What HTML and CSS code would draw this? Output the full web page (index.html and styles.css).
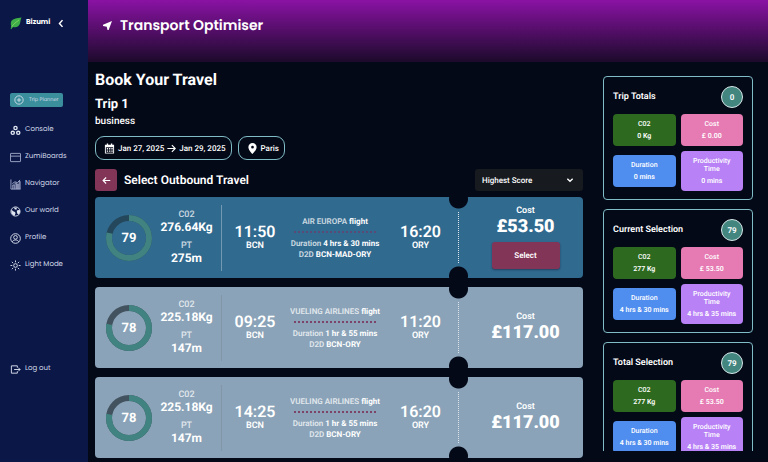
FILE: index.html
```html
<!DOCTYPE html>
<html lang="en">
<head>
<meta charset="utf-8">
<meta name="viewport" content="width=device-width, initial-scale=1">
<title>Transport Optimiser</title>
<link rel="stylesheet" href="styles.css">
</head>
<body>
<div class="app">
  <nav class="sidebar" aria-label="Main">
    <div class="brand">
      <svg class="brand-leaf" viewBox="0 0 24 24" aria-hidden="true"><path fill="#3fae49" d="M23 1C14 2 4 3 2 10c-1 4 0 7 1 9L1 23l2 1 3-4c7 2 12-1 14-7 1-4 1-8 3-12z"/><path d="M3 20C7 14 12 10 18 6" stroke="#8fdc6a" stroke-width="1.5" fill="none"/></svg>
      <span>Bizumi</span>
      <button class="collapse" type="button" aria-label="Collapse menu"><svg viewBox="0 0 8 12" aria-hidden="true"><path d="M6 1.500 2 6l4 4.500"/></svg></button>
    </div>
    <a class="nav-link nav-active" href="#"><svg class="icon" viewBox="0 0 24 24" aria-hidden="true"><circle cx="12" cy="12" r="10"/><path d="M12 7v10M7 12h10"/></svg>Trip Planner</a>
    <a class="nav-link" href="#"><svg class="icon icon-bold" viewBox="0 0 24 24" aria-hidden="true"><circle cx="12" cy="6.500" r="3.500"/><circle cx="6" cy="17" r="3.500"/><circle cx="18" cy="17" r="3.500"/></svg>Console</a>
    <a class="nav-link" href="#"><svg class="icon icon-thin" viewBox="0 0 24 24" aria-hidden="true"><rect x="1" y="3" width="22" height="18" rx="1"/><path d="M1 9h22"/></svg>ZumiBoards</a>
    <a class="nav-link" href="#"><svg class="icon icon-thin" viewBox="0 0 24 24" aria-hidden="true"><path d="M2 1v21h21M6 22V13h3v9M11 22V9h3v13M16 22V11h2v11M20 22V5h2v17M5 10l6-4 5 2 6-6"/></svg>Navigator</a>
    <a class="nav-link" href="#"><svg class="icon" viewBox="0 0 24 24" aria-hidden="true"><circle cx="12" cy="12" r="10"/><path class="solid" d="M3 8l5 4 3 1 1 3-2 5C5 20 2 15 3 8zM9 3l1 4 4 1 1-4zM15 10l6-2 1 5-3 5-3-1-1-4z"/></svg>Our world</a>
    <a class="nav-link" href="#"><svg class="icon" viewBox="0 0 24 24" aria-hidden="true"><circle cx="12" cy="12" r="10.500"/><circle cx="12" cy="9.500" r="4"/><path d="M5 19c2-5 12-5 14 0"/></svg>Profile</a>
    <a class="nav-link" href="#"><svg class="icon" viewBox="0 0 24 24" aria-hidden="true"><circle cx="12" cy="12" r="4"/><path d="M12 1v4M12 19v4M1 12h4M19 12h4M4 4l3 3M17 17l3 3M20 4l-3 3M7 17l-3 3"/></svg>Light Mode</a>
    <a class="nav-link nav-logout" href="#"><svg class="icon" viewBox="0 0 24 24" aria-hidden="true"><path d="M16 8V4H3v16h13v-4M9 12h13M18 8l4 4-4 4"/></svg>Log out</a>
  </nav>

  <div class="page">
    <header class="banner">
      <svg class="banner-icon" viewBox="0 0 24 24" aria-hidden="true"><path d="M24 0 0 10v3l10 2 2 9h3z"/></svg>
      <h1>Transport Optimiser</h1>
    </header>

    <div class="content">
      <main class="booking">
        <h2>Book Your Travel</h2>
        <h3>Trip 1</h3>
        <p class="purpose">business</p>
        <div class="chips">
          <button class="chip" type="button">
            <svg viewBox="0 0 24 24" aria-hidden="true"><path fill-rule="evenodd" d="M2 4h4V1h3v3h6V1h3v3h4v19H2zM4 9.500V21h16V9.500zM6 11h3v2H6zm5 0h3v2h-3zm5 0h3v2h-3zM6 14h3v2H6zm5 0h3v2h-3zm5 0h3v2h-3zM6 17h3v2H6zm5 0h3v2h-3zm5 0h3v2h-3z"/></svg>
            <span>Jan 27, 2025</span>
            <svg class="line" viewBox="0 0 24 24" aria-hidden="true"><path d="M1 12h21M13 3l9 9-9 9"/></svg>
            <span>Jan 29, 2025</span>
          </button>
          <button class="chip" type="button">
            <svg viewBox="0 0 24 24" aria-hidden="true"><path fill-rule="evenodd" d="M12 0a9 9 0 0 0-9 9c0 6 9 15 9 15s9-9 9-15a9 9 0 0 0-9-9zm0 6a3 3 0 1 1 0 6 3 3 0 0 1 0-6z"/></svg>
            <span>Paris</span>
          </button>
        </div>
        <div class="toolbar">
          <button class="back" type="button" aria-label="Back"><svg viewBox="0 0 24 24" aria-hidden="true"><path d="M22 12H3M11 4l-8 8 8 8"/></svg></button>
          <h4>Select Outbound Travel</h4>
          <div class="sort">
            <select aria-label="Sort by"><option>Highest Score</option><option>Lowest Cost</option></select>
            <svg viewBox="0 0 12 8" aria-hidden="true"><path d="M2 2l4 4 4-4"/></svg>
          </div>
        </div>

        <article class="ticket ticket-selected">
          <div class="scores">
            <div class="ring"><svg viewBox="0 0 46 46" aria-hidden="true"><circle class="track" cx="23" cy="23" r="20"/><circle class="value" cx="23" cy="23" r="20" pathLength="100" stroke-dasharray="79 100"/></svg><b>79</b></div>
            <dl><dt>C02</dt><dd>276.64Kg</dd><dt>PT</dt><dd>275m</dd></dl>
          </div>
          <div class="route">
            <div class="stop"><time>11:50</time><span>BCN</span></div>
            <div class="leg"><p><span>AIR EUROPA</span> flight</p><hr><p><span>Duration</span> 4 hrs &amp; 30 mins</p><p><span>D2D</span> BCN-MAD-ORY</p></div>
            <div class="stop"><time>16:20</time><span>ORY</span></div>
          </div>
          <div class="cost"><span>Cost</span><strong>£53.50</strong><button class="select" type="button">Select</button></div>
        </article>

        <article class="ticket">
          <div class="scores">
            <div class="ring"><svg viewBox="0 0 46 46" aria-hidden="true"><circle class="track" cx="23" cy="23" r="20"/><circle class="value" cx="23" cy="23" r="20" pathLength="100" stroke-dasharray="78 100"/></svg><b>78</b></div>
            <dl><dt>C02</dt><dd>225.18Kg</dd><dt>PT</dt><dd>147m</dd></dl>
          </div>
          <div class="route">
            <div class="stop"><time>09:25</time><span>BCN</span></div>
            <div class="leg"><p><span>VUELING AIRLINES</span> flight</p><hr><p><span>Duration</span> 1 hr &amp; 55 mins</p><p><span>D2D</span> BCN-ORY</p></div>
            <div class="stop"><time>11:20</time><span>ORY</span></div>
          </div>
          <div class="cost"><span>Cost</span><strong>£117.00</strong></div>
        </article>

        <article class="ticket">
          <div class="scores">
            <div class="ring"><svg viewBox="0 0 46 46" aria-hidden="true"><circle class="track" cx="23" cy="23" r="20"/><circle class="value" cx="23" cy="23" r="20" pathLength="100" stroke-dasharray="78 100"/></svg><b>78</b></div>
            <dl><dt>C02</dt><dd>225.18Kg</dd><dt>PT</dt><dd>147m</dd></dl>
          </div>
          <div class="route">
            <div class="stop"><time>14:25</time><span>BCN</span></div>
            <div class="leg"><p><span>VUELING AIRLINES</span> flight</p><hr><p><span>Duration</span> 1 hr &amp; 55 mins</p><p><span>D2D</span> BCN-ORY</p></div>
            <div class="stop"><time>16:20</time><span>ORY</span></div>
          </div>
          <div class="cost"><span>Cost</span><strong>£117.00</strong></div>
        </article>
      </main>

      <aside class="summary">
        <section class="panel">
          <header><h5>Trip Totals</h5><span class="badge">0</span></header>
          <div class="tiles">
            <div class="tile tile-co2"><span>C02</span><b>0 Kg</b></div>
            <div class="tile tile-cost"><span>Cost</span><b>£ 0.00</b></div>
            <div class="tile tile-duration"><span>Duration</span><b>0 mins</b></div>
            <div class="tile tile-productivity"><span>Productivity Time</span><b>0 mins</b></div>
          </div>
        </section>
        <section class="panel">
          <header><h5>Current Selection</h5><span class="badge">79</span></header>
          <div class="tiles">
            <div class="tile tile-co2"><span>C02</span><b>277 Kg</b></div>
            <div class="tile tile-cost"><span>Cost</span><b>£ 53.50</b></div>
            <div class="tile tile-duration"><span>Duration</span><b>4 hrs &amp; 30 mins</b></div>
            <div class="tile tile-productivity"><span>Productivity Time</span><b>4 hrs &amp; 35 mins</b></div>
          </div>
        </section>
        <section class="panel">
          <header><h5>Total Selection</h5><span class="badge">79</span></header>
          <div class="tiles">
            <div class="tile tile-co2"><span>C02</span><b>277 Kg</b></div>
            <div class="tile tile-cost"><span>Cost</span><b>£ 53.50</b></div>
            <div class="tile tile-duration"><span>Duration</span><b>4 hrs &amp; 30 mins</b></div>
            <div class="tile tile-productivity"><span>Productivity Time</span><b>4 hrs &amp; 35 mins</b></div>
          </div>
        </section>
      </aside>
    </div>
  </div>
</div>
</body>
</html>
```
FILE: styles.css
```css
:root {
  --bg: #040918;
  --navy: #0a1747;
  --teal: #43857f;
  --outline: #7fbcc6;
  --plum: #833557;
}

* { box-sizing: border-box; margin: 0; }

body {
  background: var(--bg);
  color: #fff;
  font-family: Roboto, "Liberation Sans", sans-serif;
  text-rendering: geometricPrecision;
}

button, select { font: inherit; color: inherit; border: 0; padding: 0; background: none; text-rendering: inherit; }
svg { flex: none; display: block; }

.app { display: flex; height: 100vh; overflow: hidden; }

/* Sidebar */
.sidebar {
  flex: 0 0 88px;
  display: flex;
  flex-direction: column;
  gap: 13px;
  padding: 16px 10px 86px;
  background: var(--navy);
  font-family: Poppins, Inter, sans-serif;
}
.brand {
  display: flex;
  align-items: center;
  gap: 4px;
  height: 14px;
  margin-bottom: 50px;
  font-size: 7px;
  font-weight: 700;
}
.brand-leaf { width: 12px; height: 12px; }
.collapse { margin-left: 4px; }
.collapse svg { width: 6px; height: 9px; fill: none; stroke: #fff; stroke-width: 2; }
.nav-link {
  display: flex;
  align-items: center;
  gap: 4px;
  height: 14px;
  color: #d3d9e8;
  font-size: 7px;
  text-decoration: none;
  white-space: nowrap;
}
.nav-active {
  gap: 5px;
  width: 53px;
  margin-bottom: 3px;
  padding-left: 4px;
  border-radius: 2px;
  background: #3b8f9c;
  font-size: 5px;
}
.nav-active .icon { width: 10px; height: 10px; }
.nav-logout { margin-top: auto; }
.icon { width: 11px; height: 11px; fill: none; stroke: #dfe4f1; stroke-width: 2; }
.icon-bold { stroke-width: 3; }
.icon-thin { stroke-width: 2; stroke: #a3abc9; }
.icon .solid { fill: #dfe4f1; stroke: none; }

/* Header */
.page { flex: 1; min-width: 0; display: flex; flex-direction: column; }
.banner {
  flex: 0 0 62px;
  display: flex;
  align-items: center;
  gap: 8px;
  padding: 0 15px 12px;
  background: linear-gradient(#8a12a4, #1c0a2b);
}
.banner-icon { width: 9px; height: 9px; fill: #fff; }
.banner h1 { font: 600 14px/20px Poppins, Inter, sans-serif; }

.content {
  flex: 1;
  min-height: 0;
  display: flex;
  gap: 20px;
  padding: 7px 15px 0 7px;
}

/* Booking column */
.booking { flex: 1; min-width: 0; display: flex; flex-direction: column; }
.booking h2 { font-size: 16px; line-height: 22px; font-weight: 700; }
.booking h3 { margin-top: 5px; font-size: 13px; line-height: 18px; font-weight: 700; }
.purpose { font-size: 10px; line-height: 16px; font-weight: 500; }
.chips { display: flex; gap: 6px; margin-top: 6px; }
.chip {
  display: flex;
  align-items: center;
  gap: 3px;
  height: 24px;
  padding: 0 5px 0 8px;
  border: 1px solid var(--outline);
  border-radius: 9px;
  font-size: 8px;
  font-weight: 500;
}
.chip svg { width: 11px; height: 11px; fill: #fff; }
.chip .line { width: 9px; height: 9px; fill: none; stroke: #fff; stroke-width: 3; }
.toolbar { display: flex; align-items: center; gap: 7px; margin: 9px 0 6px; }
.toolbar h4 { flex: 1; font-size: 12px; line-height: 16px; font-weight: 600; }
.back {
  display: grid;
  place-items: center;
  width: 22px;
  height: 22px;
  border-radius: 3px;
  background: var(--plum);
}
.back svg { width: 9px; height: 9px; fill: none; stroke: #fff; stroke-width: 3; }
.sort { position: relative; }
.sort select {
  appearance: none;
  display: block;
  width: 108px;
  height: 22px;
  padding: 0 7px;
  border-radius: 3px;
  background: #171b1f;
  font-size: 8px;
  font-weight: 500;
}
.sort svg {
  position: absolute;
  right: 9px;
  top: 8px;
  width: 8px;
  height: 6px;
  fill: none;
  stroke: #fff;
  stroke-width: 2;
  pointer-events: none;
}

/* Tickets */
.ticket {
  flex: none;
  display: grid;
  grid-template-columns: 127fr 237fr 124fr;
  min-height: 81px;
  margin-bottom: 9px;
  border-radius: 4px;
  background: #8aa3b8;
}
.ticket-selected { background: #316a8f; }
.scores {
  display: flex;
  align-items: center;
  margin: 8px 0 7px;
  padding-left: 11px;
  border-right: 1px solid #8196a6;
}
.ticket-selected .scores { border-color: #7298b2; }
.ring { position: relative; width: 46px; height: 46px; flex: none; }
.ring svg { width: 100%; height: 100%; transform: rotate(-90deg); }
.ring circle { fill: none; stroke-width: 6; }
.ring .track { stroke: #42525f; }
.ring .value { stroke: #418381; }
.ticket-selected .ring .track { stroke: #24475c; }
.ring b {
  position: absolute;
  inset: 0;
  display: grid;
  place-items: center;
  font-size: 13px;
}
.scores dl { flex: 1; text-align: center; }
.scores dt { font-size: 9px; line-height: 9px; font-weight: 500; opacity: 0.75; }
.scores dd { font-size: 12px; line-height: 14px; font-weight: 700; }
.scores dt:nth-of-type(2) { margin-top: 8px; }

.route {
  display: grid;
  grid-template-columns: 66px 1fr 77px;
  align-items: center;
  text-align: center;
}
.stop { display: flex; flex-direction: column; font-size: 9px; line-height: 11px; font-weight: 600; }
.stop time { font-size: 16px; line-height: 18px; }
.leg { display: flex; flex-direction: column; align-items: center; }
.leg p { font-size: 8px; line-height: 11px; font-weight: 700; white-space: nowrap; }
.leg span { font-weight: 600; opacity: 0.75; }
.leg hr { width: 82px; margin: 4px 0 5px; border: 0; border-top: 2px dotted #7b4468; }
.ticket-selected .leg hr { border-top-color: #5a4a76; }

.cost {
  position: relative;
  display: flex;
  flex-direction: column;
  align-items: center;
  justify-content: center;
  padding-left: 9px;
  font-size: 9px;
  line-height: 10px;
  font-weight: 600;
}
.cost strong { font-size: 18px; line-height: 22px; }
/* Perforation line with a half-round cut at each end */
.cost::before {
  content: "";
  position: absolute;
  left: -1px;
  top: 15px;
  bottom: 15px;
  border-left: 1px dotted #dde5ec;
}
.cost::after {
  content: "";
  position: absolute;
  left: -10px;
  top: 0;
  bottom: 0;
  width: 19px;
  background:
    radial-gradient(circle at 50% 2px, var(--bg) 9px, transparent 10px) top / 100% 12px no-repeat,
    radial-gradient(circle at 50% 10px, var(--bg) 9px, transparent 10px) bottom / 100% 12px no-repeat;
}
.select {
  width: 68px;
  height: 27px;
  margin-top: 4px;
  border-radius: 3px;
  background: var(--plum);
  box-shadow: 0 1px 2px rgb(20 20 50 / 50%);
  font-size: 8px;
}

/* Summary column */
.summary {
  flex: 0 0 150px;
  display: flex;
  flex-direction: column;
  gap: 9px;
  margin: 7px 0 11px;
  overflow: hidden;
}
.panel {
  flex: none;
  padding: 9px 9px 8px;
  border: 1px solid var(--outline);
  border-radius: 4px;
}
.panel header { display: flex; align-items: center; justify-content: space-between; }
.panel h5 { font-size: 9px; line-height: 12px; font-weight: 600; }
.badge {
  display: grid;
  place-items: center;
  width: 22px;
  height: 22px;
  border: 1px solid #d5e6e6;
  border-radius: 50%;
  background: var(--teal);
  font-size: 8px;
  font-weight: 600;
}
.tiles {
  display: grid;
  grid-template-columns: 1fr 1fr;
  align-items: center;
  gap: 5px;
  margin-top: 6px;
}
.tile {
  display: flex;
  flex-direction: column;
  justify-content: center;
  gap: 4px;
  min-height: 32px;
  padding: 6px 4px;
  border-radius: 4px;
  font-size: 7px;
  line-height: 8px;
  font-weight: 500;
  text-align: center;
}
.tile b { font-weight: 600; white-space: nowrap; }
.tile-co2 { background: #2d6a20; }
.tile-cost { background: #e67ab3; }
.tile-duration { background: #4f8def; }
.tile-productivity { background: #b881f6; }
```
